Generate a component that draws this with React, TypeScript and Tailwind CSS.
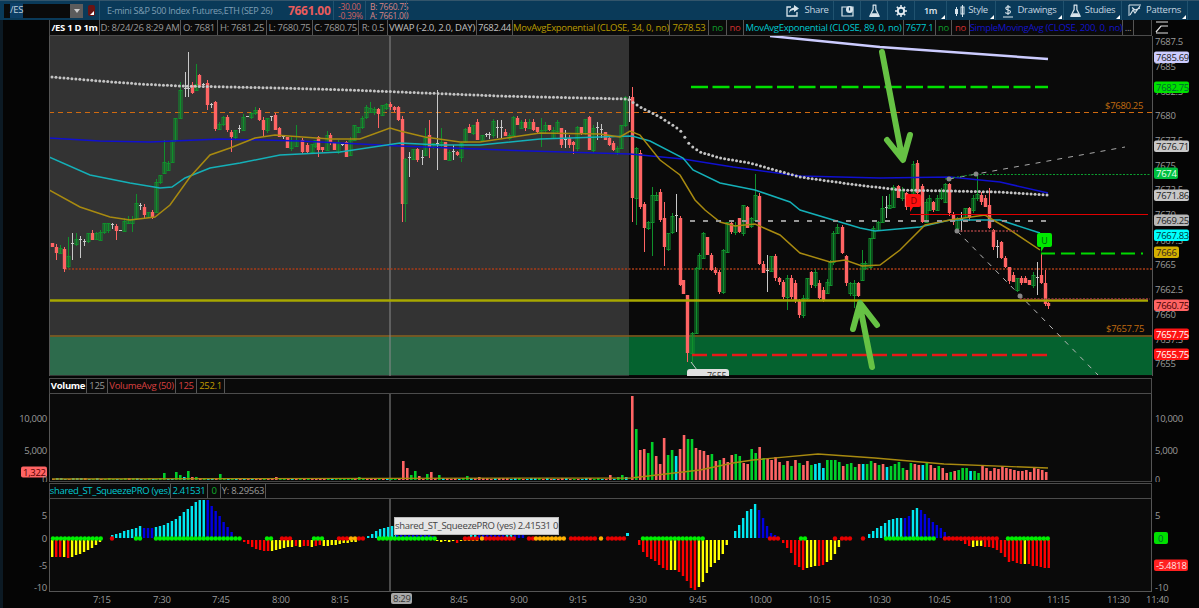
import React from "react";

type P = [number, number];

const lerp = (pts: P[], x: number) => {
  for (let i = 1; i < pts.length; i++) {
    if (x <= pts[i][0]) {
      const [a, b] = pts[i - 1];
      const [c, d] = pts[i];
      return b + ((d - b) * (x - a)) / (c - a);
    }
  }
  return pts[pts.length - 1][1];
};
const poly = (pts: P[]) => pts.map((p) => p.join(",")).join(" ");

let seed = 17;
const rnd = () => {
  seed = (seed * 16807) % 2147483647;
  return seed / 2147483647;
};

// x, open, close, high (0 = auto), low (0 = auto)
const CANDLES: number[][] = [
  [52,243,247],[56,247,253,0,260],[60,253,248],[64,249,269],[68,266,256,237],[72,245,243,233,260],[76,244,239,233],[80,239,241,0,258],[84,241,243],[88,241,233],[92,233,240],[96,239,233],[100,240,232],[104,232,223],[108,230,223],[112,224,226],[116,226,231,0,240],[120,231,230],[124,231,221],[128,223,219],[132,223,219,0,232],
  [136,218,203,194],[140,205,207],[144,207,215],[148,217,212],[152,212,218],[156,212,182],[160,182,175],[164,173,162,140],[168,170,163],[172,162,140],[175,140,118],[180,118,90,82],[185,88,90,72,97],[188,88,89,52,97],[192,85,93],[196,90,84,64],[199,75,87],[203,86,84],[207,83,105,0,110],[211,105,104],[215,102,129],[219,129,124],[223,124,117],[227,117,130],[231,132,137,0,152],[235,137,130],[239,130,128],[243,130,117],[247,117,116],[251,117,113],[255,113,110],[259,110,120],[263,120,130,0,137],[267,130,118],[271,118,116],[275,115,130],[279,128,137],[283,137,136],[287,137,148],[291,148,140],[296,146,140,125],[302,140,152],[307,145,152],[312,152,144],[315,146,140],[318,137,150,0,157],[322,147,150],[327,150,135,131],[330,135,143],[334,143,150],[338,152,142],[342,144,146],[346,142,157],[350,155,140],[354,140,125],[358,132,127],[362,127,118],[366,117,107],[370,112,108,102],[374,112,109],[378,109,114,0,128],[382,115,105],[386,108,104],[390,104,107],[394,107,110],[398,107,120],
  [402,119,204,0,222],[405,203,159,0,222],[409,157,158,152,177],[413,159,149],[417,149,160],[422,158,157,150,165],[425,155,138,128],[429,135,147,120,158],[433,147,143],[437,145,143,90,170],[441,145,142,128],[445,142,160],[449,160,152],[453,152,151,145,160],[457,152,155],[461,157,143,0,162],[465,142,129],[469,127,133],[473,133,125],[477,122,140],[482,140,135],[486,136,134],[489,136,134],[493,135,121],[497,128,127,120,138],[501,128,127,120,138],[505,132,136],[509,138,135],[513,135,117],[517,118,125],[521,128,122],[525,122,128],[529,128,122],[533,122,130],[537,127,132],[541,133,130,118,147],[545,130,125],[549,125,130],[553,138,130],[557,131,122],[561,128,145,0,148],[565,140,139,130,148],[569,138,145],[573,142,145,0,154],[577,148,127],[581,127,133],[585,133,119],[589,117,150],[593,150,128],[597,128,127,122,140],[601,130,129,124,138],[605,132,140],[609,138,145],[613,143,150],[617,153,148],[621,148,125],[625,125,97],[629,100,99,96,122],
  [632,97,198,87,222],[636,198,148,147,225],[640,153,207],[644,204,228,0,252],[648,228,222],[652,222,195,187,256],[656,200,195],[660,192,220],[664,218,247,202,266],[668,249,233],[672,232,216],[676,216,215,194,232],[680,218,285],[683,280,294],[687,295,353,0,362],[692,353,333,0,363],[696,333,268],[699,268,255],[703,258,233],[707,237,255],[711,255,270],[715,270,273],[719,272,292],[723,292,250],[727,252,222],[731,223,232],[735,232,225],[739,218,232],[743,233,205],[747,207,228],[751,226,218],[755,220,195,174],[759,196,264],[763,264,273],[767,271,270,255,292],[771,271,256],[775,256,278],[779,278,282],[783,282,297],[787,297,278,0,310],[791,278,297],[795,283,300],[799,300,315],[803,315,298,0,318],[807,298,278],[811,272,285],[815,285,272],[819,283,298],[823,290,300],[827,293,282],[830,285,262],[833,262,233],[837,233,227,224],[842,227,253],[846,256,283],[850,293,283],[854,295,283,0,308],[858,283,296],[862,280,263,250],[865,268,263],[870,267,238],[873,238,228],[878,230,222],[882,222,208,196],[886,208,207,196,218],[889,208,205,194],[893,207,187],[898,186,198],[902,198,190],[906,193,207],[909,205,197],[913,197,164],[917,163,193,160],[922,186,222],[926,222,202],[929,210,198],[933,202,210],[937,210,198],[941,198,190],[945,202,184],[949,184,213],[953,214,222],[957,228,218],[961,220,219,212,232],[965,217,208],[969,208,218],[973,210,198],[977,198,194,174],[981,195,202],[985,198,207],[989,205,228,188],[993,230,247],[997,247,246,240,258],[1001,242,258],[1005,258,267],[1009,267,281],[1013,275,282],[1017,290,278],[1021,278,283],[1025,278,283],[1029,280,285],[1033,285,275],[1037,278,277,262,295],[1041,275,283,253],[1045,283,304,270],[1048,303,306,0,309],
];

const VWAP: P[] = [[52,77],[100,81],[140,84],[180,86],[280,88],[350,90],[400,92],[500,96],[628,99],[640,107],[660,117],[680,130],[690,145],[700,152],[720,158],[750,163],[800,177],[850,184],[900,190],[1000,192],[1048,195]];
const SMA: P[] = [[49,138],[100,141],[150,142],[220,139],[300,141],[400,146],[530,151],[630,154],[683,159],[733,167],[800,176],[880,178],[950,177],[1000,182],[1048,193]];
const EMA89: P[] = [[49,157],[90,175],[130,183],[160,188],[172,187],[185,178],[210,168],[240,163],[280,155],[340,152],[400,143],[440,145],[480,145],[540,139],[600,137],[632,136],[650,141],[683,158],[693,170],[720,183],[755,190],[790,202],[800,210],[860,228],[875,231],[920,227],[950,220],[1000,220],[1040,233]];
const EMA34: P[] = [[49,190],[80,207],[110,217],[130,220],[155,217],[170,205],[190,177],[210,155],[230,148],[255,138],[275,135],[330,139],[360,139],[390,128],[400,131],[425,137],[460,142],[480,142],[540,133],[600,134],[620,137],[630,131],[640,135],[660,160],[680,175],[695,200],[705,210],[720,222],[735,226],[755,224],[780,235],[800,253],[830,262],[845,260],[862,266],[880,265],[900,250],[925,225],[950,220],[985,215],[1010,230],[1040,250]];

const range = (a: number, b: number, s = 3.98) => {
  const out: number[] = [];
  for (let x = a; x <= b; x += s) out.push(x);
  return out;
};

const candleEls = CANDLES.map(([x, o, c, h = 0, l = 0], i) => {
  const top = Math.min(o, c);
  const bot = Math.max(o, c);
  const grey = bot - top <= 2;
  const up = c < o;
  const col = grey ? "#c8c8c8" : up ? "#10902c" : "#ff6464";
  const hi = h || top - Math.floor(rnd() * 4);
  const lo = l || bot + Math.floor(rnd() * 4);
  return (
    <g key={i}>
      <line x1={x + 0.5} x2={x + 0.5} y1={hi} y2={lo} stroke={col} strokeWidth={1} />
      {grey ? (
        <rect x={x - 1} y={top} width={3} height={1} fill={col} />
      ) : up ? (
        <rect x={x - 1} y={top + 0.5} width={3} height={bot - top} fill="none" stroke={col} strokeWidth={1} />
      ) : (
        <rect x={x - 1.2} y={top} width={3.4} height={bot - top} fill={col} />
      )}
    </g>
  );
});

const MARK: Record<string, string> = { r: "#ff6464", g: "#00d02a", c: "#00e8f0", b: "#0000e0", R: "#ff0000", y: "#ffff00" };

// volume
const VOL_R = [84,51,30,31,27,38,24,16,42,25,30,24,31,45,41,41,32,30,29,25,26,19,20,22,18,25,26,24,17,16,31,27,33,22,21,20,23,18,15,19,14,20,17,15,19,15,16,17,12,20,20,20,18,14,16,17,13,16,16,16,19,17,15,16,13,14,16,18,12,10,17,16,15,15,18,15,12,14,12,7,8,9,10,12,12,9,9,7,14,12,9,12,11,14,12,11,10,9,9,10,8,12,11,10,8];
const VOL_C = "rgrrggr" + "rrggcrrg" + "grrrrgrgrrrggrrggrgrrrrgrgrgrrgcccggggrgggrcggrgrcggggrgrrcgrrgrrgrgggcggrrr";
const VOL_SPECIAL: Record<number, [number, string]> = { 163: [7, "g"], 175: [8, "g"], 179: [5, "g"], 183: [3, "c"], 187: [9, "g"], 191: [3, "r"], 195: [3, "g"], 219: [6, "g"], 275: [3, "r"], 357: [3, "g"], 401: [19, "r"], 405: [12, "r"], 409: [5, "g"], 413: [9, "g"], 417: [4, "r"], 425: [6, "g"], 429: [8, "r"], 437: [5, "g"], 465: [4, "g"], 477: [3, "r"], 610: [5, "r"], 617: [3, "g"], 621: [5, "g"], 625: [3, "c"] };
const leftVol: React.ReactNode[] = [];
for (let i = 0; i < 145; i++) {
  const x = Math.round(52 + i * 3.98);
  const key = Object.keys(VOL_SPECIAL).map(Number).find((k) => Math.abs(k - x) <= 1.9);
  const c = key ? VOL_SPECIAL[key] : [1 + Math.floor(rnd() * 2), rnd() > 0.6 ? "r" : rnd() > 0.5 ? "c" : "g"];
  leftVol.push(<rect key={i} x={x} y={480 - (c[0] as number)} width={2.6} height={c[0] as number} fill={MARK[c[1] as string]} />);
}
const VOL_AVG: P[] = [[52,479],[631,478],[700,470],[733,463],[753,460],[818,454],[875,458],[944,464],[1048,468]];

// squeeze
const seg = (x0: number, hs: number[], cols: string, step = 3.98) =>
  hs.map((h, i) => ({ x: x0 + i * step, h, c: cols[i] ?? cols[cols.length - 1] }));
const rep = (s: string, n: number) => s.repeat(n);
const BARS = [
  ...seg(51, [-17,-17,-17,-17,-18,-17,-15,-14,-12,-10,-8,-5,-2], "yRRyRyyyyyyyy"),
  ...seg(111, [3,4,5,7,8,9,10,12,10,10,10,11,12,13,15,17,19,22,26,29,32,36,38,38,38,32,27,22,16,11,6], rep("c",8)+rep("b",3)+rep("c",13)+rep("b",10)),
  ...seg(243, [-2,-4,-7,-9,-10,-11,-11,-11,-10,-9,-8,-7,-7,-6,-7,-6,-6,-7,-6,-5,-6,-6,-5,-5,-4,-3,-3,-2,-2], "RRRRRRRyyyyyyRyRRyRRyyyyyyyyy"),
  ...seg(367, [2,4,7,9,10,11,12,13], "c"),
  ...seg(396, [12,10,9,8,7,6,5,4,3,2], "b"),
  ...seg(436, [-1,-2,-1,-2,-1,-3,-1,-1,-1,-1,-1], "yyyyyRyyyyy"),
  ...seg(470, [6,7,7,6,8,7,6,6,6,5,5,5,4,4], "ccbbbbbbbccbbb"),
  ...seg(638, [-5,-12,-17,-19,-21,-25,-28,-30,-30,-30,-32,-36,-41,-48,-50,-47,-42,-33,-27,-23,-20,-14,-5], rep("R",8)+"yy"+rep("R",5)+rep("y",8)),
  ...seg(734, [7,13,20,27,29,34,28,20,12,5,3], "ccccccbbbbb"),
  ...seg(782, [-3,-8,-13,-25,-27,-30,-28,-27,-26,-26,-25,-22,-20,-14,-7], "RRRRRRyyyRRyyyy"),
  ...seg(868, [4,7,10,12,15,18,19,20,20,20,22,28,30,28,24,20,16,13,10,6,2], "cccccccccbbccbbbbbbbb"),
  ...seg(960, [-1,-4,-6,-7,-6,-6,-7,-7,-8,-10,-13,-17,-22,-21,-23,-24,-24,-24,-26,-26,-27,-28,-28], "RRRyyyRRRRRRRRRRyRRRRRRR"),
];
const DOTS: [number, number, string][] = [
  [52,101,"#00f000"],[111,112,"#e80000"],[135,140,"#00f000"],[155,240,"#00f000"],[266,272,"#00f000"],[281,290,"#e80000"],[313,322,"#00f000"],[338,346,"#e80000"],[350,354,"#ffb000"],[358,365,"#e80000"],[378,435,"#00f000"],[464,479,"#e80000"],[481,482,"#ffb000"],[485,515,"#e80000"],[528,533,"#e80000"],[535,565,"#ffb000"],[570,596,"#e80000"],[600,603,"#ffb000"],[607,624,"#e80000"],[642,704,"#00f000"],[769,778,"#e80000"],[800,806,"#00f000"],[834,835,"#e80000"],[841,851,"#e80000"],[862,863,"#e80000"],[885,934,"#00f000"],[944,997,"#e80000"],[1007,1050,"#00f000"],
];

const PRICE_TICKS: [string, number][] = [["7687.5",41],["7685",66],["7682.5",91],["7680",115],["7677.5",140],["7675",165],["7672.5",189],["7670",214],["7667.5",240],["7665",264],["7662.5",289],["7660",314],["7657.5",339],["7655",363]];
const PRICE_TAGS: [string, number, string, string, number][] = [
  ["7685.69",57,"#ccccff","#222",35],["7682.75",87,"#00e000","#063",35],["7676.71",146,"#c8c8c8","#222",35],["7674",173,"#00c040","#eafff0",24],["7671.86",195,"#c8c8c8","#222",35],["7669.25",220,"#b8b8b8","#222",35],["7667.83",235,"#00ffff","#033",35],["7666",252,"#d4b000","#322",25],["7660.75",305,"#ff6464","#400",35],["7657.75",334,"#ff1414","#fff",35],["7655.75",354,"#ff1414","#fff",35],
];
const TIMES: [string, number][] = [["7:15",93],["7:30",153],["7:45",212],["8:00",272],["8:15",331],["8:45",450],["9:00",510],["9:15",569],["9:30",629],["9:45",689],["10:00",749],["10:15",808],["10:30",868],["10:45",928],["11:00",988],["11:15",1047],["11:30",1107],["11:40",1146]];

const Tri = () => (
  <span className="absolute right-[1px] bottom-[1px] h-0 w-0 border-b-[4px] border-l-[4px] border-b-white border-l-transparent" />
);

const Tool = ({ w, children, corner }: { w: string; children: React.ReactNode; corner?: boolean }) => (
  <div className={"relative flex h-full items-center justify-center gap-[3px] border-r border-[#20526f] text-[9.5px] text-[#c6d6e0] " + w}>
    {children}
    {corner && <Tri />}
  </div>
);

const Cell = ({ c, children, w }: { c: string; children: React.ReactNode; w: string }) => (
  <div className={"flex h-full shrink-0 items-center justify-center border-r border-[#555] whitespace-nowrap " + c + " " + w}>{children}</div>
);

const Legend = ({ children, h }: { children: React.ReactNode; h: string }) => (
  <div className="flex shrink-0">
    <div className="w-[49px] shrink-0" />
    <div className={"flex w-[1103px] shrink-0 border border-[#4c4c4c] bg-[#0a0a0a] text-[9.5px] leading-none " + h}>{children}</div>
    <div className="flex-1" />
  </div>
);

const Flask = () => (
  <svg width="11" height="14" viewBox="0 0 12 15">
    <path d="M4 1h4M4.5 1v5L1 13h10L7.5 6V1" fill="none" stroke="#d8e4ec" strokeWidth="1.3" />
    <path d="M3 10h6l2 4H1z" fill="#d8e4ec" />
  </svg>
);

export default function App() {
  return (
    <div className="flex h-[608px] w-[1199px] flex-col overflow-hidden bg-[#050505] tracking-[-0.3px] shadow-[inset_3px_0_0_#0c1a24] [font-family:'Open_Sans',sans-serif]">
      {/* top toolbar */}
      <div className="flex h-[20px] shrink-0 items-center border-t border-[#33556b] bg-[#0a3a59]">
        <div className="ml-[4px] flex h-[14px] w-[66px] items-center bg-[#0a0a0a] pl-[6px] text-[9.5px] text-[#c0d0dc]">
          <span className="bg-[#0d3f66]">/ES</span>
        </div>
        <div className="flex h-[14px] w-[13px] items-center justify-center bg-[#5c5c5c]">
          <span className="h-0 w-0 border-x-[3px] border-t-[4px] border-x-transparent border-t-[#ccc]" />
        </div>
        <div className="relative ml-[5px] flex h-[11px] w-[7px] items-center justify-center rounded-[2px] bg-[#6a1414]">
          <Tri />
        </div>
        <div className="ml-[4px] h-full w-px bg-[#20526f]" />
        <div className="ml-[7px] w-[176px] whitespace-nowrap text-[9px] text-[#7f9fb4]">E-mini S&amp;P 500 Index Futures,ETH (SEP 26)</div>
        <div className="ml-[5px] w-[41px] text-[12px] font-bold whitespace-nowrap text-[#e85c5c]">7661.00</div>
        <div className="ml-[4px] h-full w-px bg-[#20526f]" />
        <div className="ml-[4px] w-[27px] text-[8.5px] leading-[9px] text-[#d06060]">
          <div>-30.00</div>
          <div>-0.39%</div>
        </div>
        <div className="h-full w-px bg-[#20526f]" />
        <div className="ml-[4px] w-[36px] whitespace-nowrap text-[8.5px] leading-[9px] text-[#d88484]">
          <div>B: 7660.75</div>
          <div>A: 7661.00</div>
        </div>
        <div className="h-full w-px bg-[#20526f]" />
        <div className="ml-auto flex h-full">
          <Tool w="w-[52px]">
            <svg width="14" height="12" viewBox="0 0 14 12">
              <path d="M5 2H1v9h10V7" fill="none" stroke="#d8e4ec" strokeWidth="1.3" />
              <path d="M8 0l5 3.5L8 7V5C6 5 4 6 3 8c0-3 2-5 5-5.500z" fill="#d8e4ec" />
            </svg>
            <span className="ml-[1px]">Share</span>
          </Tool>
          <Tool w="w-[27px]">
            <svg width="13" height="12" viewBox="0 0 13 12">
              <path d="M1 2h11v9H1z" fill="none" stroke="#d8e4ec" strokeWidth="1.2" />
              <circle cx="8.500" cy="4.500" r="3.500" fill="#d8e4ec" />
              <path d="M8.500 2.500v3" stroke="#0a3a59" strokeWidth="1.2" />
            </svg>
          </Tool>
          <Tool w="w-[27px]"><Flask /></Tool>
          <Tool w="w-[27px]">
            <svg width="12" height="12" viewBox="0 0 12 12">
              <circle cx="6" cy="6" r="3.200" fill="none" stroke="#e4ecf2" strokeWidth="2" />
              <path d="M6 0v2.500M6 9.500V12M0 6h2.500M9.500 6H12M1.800 1.800l1.800 1.800M8.400 8.400l1.800 1.800M10.200 1.800L8.400 3.600M3.600 8.400l-1.800 1.800" stroke="#e4ecf2" strokeWidth="1.500" />
            </svg>
          </Tool>
          <Tool w="w-[32px]" corner><span className="text-[9px] font-semibold text-[#e4ecf2]">1m</span></Tool>
          <Tool w="w-[49px]" corner>
            <svg width="11" height="14" viewBox="0 0 11 14">
              <path d="M2.500 3v9M8.500 1v12" stroke="#d8e4ec" strokeWidth="1" />
              <rect x="1" y="5" width="3" height="5" fill="#d8e4ec" />
              <rect x="7" y="3" width="3" height="7" fill="none" stroke="#d8e4ec" />
            </svg>
            <span>Style</span>
          </Tool>
          <Tool w="w-[68px]" corner>
            <svg width="10" height="14" viewBox="0 0 10 14">
              <path d="M0 13h10M5 1v10M7.500 3.500C6 2 2.500 2.500 2.800 4.500c.3 2 4.700 1 4.700 3.200C7.500 9.800 4 10 2.300 8.500" fill="none" stroke="#d8e4ec" strokeWidth="1.100" />
            </svg>
            <span className="ml-[2px]">Drawings</span>
          </Tool>
          <Tool w="w-[58px]" corner>
            <Flask />
            <span className="ml-[1px]">Studies</span>
          </Tool>
          <Tool w="w-[66px]" corner>
            <svg width="14" height="13" viewBox="0 0 14 13">
              <path d="M1 1h12M1 1v11" stroke="#d8e4ec" strokeWidth="1" />
              <path d="M2 11l3-5 2 3 5-7M4 3.500l3 2.500 5-2" fill="none" stroke="#d8e4ec" strokeWidth="1.200" />
            </svg>
            <span className="ml-[1px]">Patterns</span>
          </Tool>
          <div className="w-[11px]" />
        </div>
      </div>

      {/* main legend */}
      <div className="flex h-[16px] shrink-0">
        <div className="w-[49px] shrink-0" />
        <div className="flex w-[1103px] shrink-0 border-x border-b border-[#4c4c4c] bg-[#0a0a0a] text-[9.5px] leading-none">
          <Cell c="font-bold text-white" w="w-[50px]">/ES 1 D 1m</Cell>
          <Cell c="text-[#9a9a9a]" w="w-[81px]">D: 8/24/26 8:29 AM</Cell>
          <Cell c="text-[#9a9a9a]" w="w-[37px]">O: 7681</Cell>
          <Cell c="text-[#9a9a9a]" w="w-[49px]">H: 7681.25</Cell>
          <Cell c="text-[#9a9a9a]" w="w-[46px]">L: 7680.75</Cell>
          <Cell c="text-[#9a9a9a]" w="w-[46px]">C: 7680.75</Cell>
          <Cell c="text-[#9a9a9a]" w="w-[29px]">R: 0.5</Cell>
          <Cell c="text-[#c0c0c0]" w="w-[89px]">VWAP (-2.0, 2.0, DAY)</Cell>
          <Cell c="text-[#c0c0c0]" w="w-[36px]">7682.44</Cell>
          <Cell c="text-[#b89a00]" w="w-[157px]">MovAvgExponential (CLOSE, 34, 0, no)</Cell>
          <Cell c="text-[#b89a00]" w="w-[39px]">7678.53</Cell>
          <Cell c="text-[#0f9a2a]" w="w-[18px]">no</Cell>
          <Cell c="text-[#d03030]" w="w-[17px]">no</Cell>
          <Cell c="text-[#00c8d0]" w="w-[160px]">MovAvgExponential (CLOSE, 89, 0, no)</Cell>
          <Cell c="text-[#00c8d0]" w="w-[32px]">7677.1</Cell>
          <Cell c="text-[#0f9a2a]" w="w-[16px]">no</Cell>
          <Cell c="text-[#d03030]" w="w-[18px]">no</Cell>
          <Cell c="text-[#1414c8]" w="w-[153px]">SimpleMovingAvg (CLOSE, 200, 0, no)</Cell>
          <Cell c="text-[#9a9a9a]" w="w-[11px]">...</Cell>
        </div>
        <svg className="mt-[1px] ml-[3px] block h-[13px] w-[14px]" viewBox="0 0 14 13">
          <path d="M1 1h12M1 12h12M1 11l5-6h7" fill="none" stroke="#e0e0e0" strokeWidth="1.200" />
        </svg>
      </div>

      {/* main chart */}
      <div className="flex h-[340px] shrink-0">
        <div className="w-[49px] shrink-0" />
        <svg className="block h-[340px] w-[1103px] shrink-0" viewBox="49 36 1103 340">
          <rect x="49" y="36" width="580" height="340" fill="#333333" />
          <rect x="629" y="36" width="523" height="340" fill="#0a0a0a" />
          <rect x="49" y="337" width="580" height="38" fill="#2d6b4c" />
          <rect x="629" y="337" width="523" height="38" fill="#05622f" />
          <line x1="49" x2="1152" y1="336" y2="336" stroke="#8a6420" strokeWidth="1.500" />
          <line x1="390" x2="390" y1="36" y2="376" stroke="#8c8c8c" />
          <line x1="49" x2="1152" y1="112.500" y2="112.500" stroke="#d06a10" strokeDasharray="5 4" />
          <line x1="65" x2="1152" y1="269" y2="269" stroke="#a83c18" strokeDasharray="2 1.500" strokeWidth="1.300" />
          <text x="1105" y="109" fontSize="9.5" fill="#c06a10">$7680.25</text>
          <text x="1106" y="332" fontSize="9.5" fill="#c06a10">$7657.75</text>

          {candleEls}

          <polyline points={poly(SMA)} fill="none" stroke="#1010d0" strokeWidth="1.500" />
          <polyline points={poly(EMA89)} fill="none" stroke="#14b0b8" strokeWidth="1.500" />
          <polyline points={poly(EMA34)} fill="none" stroke="#a88a10" strokeWidth="1.500" />
          {range(52, 1048).map((x) => (
            <circle key={x} cx={x} cy={lerp(VWAP, x)} r="1.500" fill="#c4c4c4" />
          ))}

          <polyline points="770,36 880,47 1048,59" fill="none" stroke="#ccccff" strokeWidth="2.500" />
          <line x1="691" x2="1048" y1="87" y2="87" stroke="#00e000" strokeWidth="2.500" strokeDasharray="17 4.500" />
          <line x1="690" x2="1048" y1="221" y2="221" stroke="#989898" strokeWidth="2" strokeDasharray="5 8" />
          <line x1="910" x2="1148" y1="214.500" y2="214.500" stroke="#e00000" strokeWidth="1.200" />
          <line x1="976" x2="1150" y1="174.500" y2="174.500" stroke="#0ca030" strokeDasharray="2 1.500" />
          <line x1="1041" x2="1143" y1="253.500" y2="253.500" stroke="#00d800" strokeWidth="2" strokeDasharray="14 6" />
          <line x1="692" x2="1048" y1="355" y2="355" stroke="#e81818" strokeWidth="2.500" strokeDasharray="15 5" />
          <line x1="49" x2="1148" y1="300.500" y2="300.500" stroke="#a8a800" strokeWidth="2.500" />
          <line x1="957" x2="1018" y1="231" y2="231" stroke="#a04040" strokeDasharray="2 1.500" strokeWidth="1.300" />
          <line x1="1020" x2="1150" y1="299" y2="299" stroke="#a04040" strokeDasharray="2 1.500" strokeWidth="1.300" />
          <line x1="949" x2="1125" y1="179" y2="147" stroke="#a8a8a8" strokeDasharray="5 6" />
          <line x1="957" x2="1098" y1="231" y2="375" stroke="#b8b8b8" strokeDasharray="5 6" />
          <line x1="945" x2="976" y1="179" y2="174" stroke="#10a030" strokeDasharray="2 2" />
          <circle cx="949" cy="179" r="2.500" fill="#888" />
          <circle cx="976" cy="174" r="2.500" fill="#888" />
          <circle cx="957" cy="231" r="2.500" fill="#888" />
          <circle cx="1020" cy="296" r="2.500" fill="#888" />

          {/* D / U bubbles */}
          <path d="M908 194h11a2 2 0 0 1 2 2v9a2 2 0 0 1-2 2h-6l-3 5v-5h-2a2 2 0 0 1-2-2v-9a2 2 0 0 1 2-2z" fill="#ff1010" />
          <text x="913.500" y="204" textAnchor="middle" fontSize="9" fill="#7a0000">D</text>
          <path d="M1039 233h11a2 2 0 0 1 2 2v10a2 2 0 0 1-2 2h-6l-3 5v-5h-2a2 2 0 0 1-2-2v-10a2 2 0 0 1 2-2z" fill="#00e800" />
          <text x="1044.500" y="244" textAnchor="middle" fontSize="9" fill="#005a10">U</text>

          {/* low bubble */}
          <line x1="691" x2="697" y1="362" y2="370" stroke="#ccc" />
          <rect x="687" y="369" width="42" height="12" rx="3" fill="#e0e0e0" />
          <text x="707" y="379" fontSize="9" fill="#333">7655</text>

          {/* hand drawn arrows */}
          <path d="M882 52 L902 157 M887 140 L903 160 L910 135" fill="none" stroke="#66c244" strokeWidth="6" strokeLinecap="round" strokeLinejoin="round" />
          <path d="M872 367 L860 306 M853 329 L860 303 L877 325" fill="none" stroke="#66c244" strokeWidth="6" strokeLinecap="round" strokeLinejoin="round" />
          <line x1="49.500" x2="49.500" y1="36" y2="376" stroke="#555" />
        </svg>
        <svg className="block h-[340px] w-[47px] shrink-0 border-l border-[#555]" viewBox="1153 36 46 340">
          {PRICE_TICKS.map(([t, y]) => (
            <text key={t} x="1155" y={y + 3.500} fontSize="9.5" fill="#9a9a9a">{t}</text>
          ))}
          {PRICE_TAGS.map(([t, y, bg, fg, w]) => (
            <g key={t}>
              <rect x="1154" y={y - 5.500} width={w} height="11.500" rx="2" fill={bg} />
              <text x="1156" y={y + 3.500} fontSize="9.5" fill={fg}>{t}</text>
            </g>
          ))}
        </svg>
      </div>

      <div className="h-[2px] shrink-0" />

      {/* volume legend */}
      <Legend h="h-[16px]">
        <Cell c="font-bold text-white" w="w-[37px]">Volume</Cell>
        <Cell c="text-[#9a9a9a]" w="w-[21px]">125</Cell>
        <Cell c="text-[#d84040]" w="w-[68px]">VolumeAvg (50)</Cell>
        <Cell c="text-[#d84040]" w="w-[21px]">125</Cell>
        <Cell c="text-[#c09a00]" w="w-[28px]">252.1</Cell>
      </Legend>

      {/* volume */}
      <div className="flex h-[88px] shrink-0">
        <svg className="block h-[88px] w-[49px] shrink-0" viewBox="0 394 49 88">
          <text x="47" y="422" textAnchor="end" fontSize="9.5" fill="#9a9a9a">10,000</text>
          <text x="47" y="454" textAnchor="end" fontSize="9.5" fill="#9a9a9a">5,000</text>
          <rect x="21" y="466.500" width="26" height="11" rx="2" fill="#ff6464" />
          <text x="23" y="475.500" fontSize="9.5" fill="#500">1,322</text>
          <text x="47" y="483" textAnchor="end" fontSize="9" fill="#9a9a9a">0</text>
        </svg>
        <svg className="block h-[88px] w-[1103px] shrink-0 border-x border-[#555] bg-[#0a0a0a]" viewBox="50 394 1101 88">
          <line x1="390" x2="390" y1="394" y2="482" stroke="#8c8c8c" />
          {leftVol}
          {VOL_R.map((h, i) => (
            <rect key={i} x={631 + i * 3.98} y={480 - h} width={2.6} height={h} fill={MARK[VOL_C[i] ?? "r"]} />
          ))}
          <polyline points={poly(VOL_AVG)} fill="none" stroke="#a88a10" strokeWidth="1.300" />
          <line x1="50" x2="1152" y1="481.500" y2="481.500" stroke="#444" />
        </svg>
        <svg className="block h-[88px] w-[47px] shrink-0" viewBox="1152 394 47 88">
          <text x="1155" y="422" fontSize="9.5" fill="#9a9a9a">10,000</text>
          <text x="1155" y="454" fontSize="9.5" fill="#9a9a9a">5,000</text>
          <text x="1155" y="483" fontSize="9" fill="#9a9a9a">0</text>
        </svg>
      </div>

      <div className="h-px shrink-0" />

      {/* squeeze legend */}
      <Legend h="h-[16px]">
        <Cell c="text-[#00c8d0]" w="w-[121px]">shared_ST_SqueezePRO (yes)</Cell>
        <Cell c="text-[#00c8d0]" w="w-[37px]">2.41531</Cell>
        <Cell c="text-[#0fb02a]" w="w-[13px]">0</Cell>
        <Cell c="text-[#9a9a9a]" w="w-[45px]">Y: 8.29563</Cell>
      </Legend>

      {/* squeeze */}
      <div className="flex h-[93px] shrink-0">
        <svg className="block h-[93px] w-[49px] shrink-0" viewBox="0 499 49 93">
          <text x="47" y="519" textAnchor="end" fontSize="9.5" fill="#9a9a9a">5</text>
          <text x="47" y="542" textAnchor="end" fontSize="9.5" fill="#9a9a9a">0</text>
          <text x="47" y="569" textAnchor="end" fontSize="9.5" fill="#9a9a9a">-5</text>
          <text x="47" y="591" textAnchor="end" fontSize="9.5" fill="#9a9a9a">-10</text>
        </svg>
        <div className="relative w-[1103px] shrink-0">
          <svg className="block h-[93px] w-[1103px] border-x border-b border-[#555] bg-[#0a0a0a]" viewBox="50 499 1101 92">
            <line x1="390" x2="390" y1="499" y2="592" stroke="#8c8c8c" />
            {BARS.map((b, i) => (
              <rect key={i} x={b.x} y={b.h > 0 ? 538 - b.h : 540} width={2.400} height={Math.abs(b.h)} fill={MARK[b.c]} />
            ))}
            {DOTS.flatMap(([a, b, c]) =>
              range(a, b, 3.980).map((x) => <circle key={a + "-" + x} cx={x + 1} cy="538.500" r="2.200" fill={c} />)
            )}
            <rect x="626" y="533" width="3" height="3" fill="#00e8f0" />
          </svg>
          <div className="absolute top-[18px] left-[345px] flex h-[18px] w-[165px] items-center justify-center border border-[#bbb] bg-[#e6e6e6] text-[9.5px] whitespace-nowrap text-[#444]">
            shared_ST_SqueezePRO (yes) 2.41531 0
          </div>
        </div>
        <svg className="block h-[93px] w-[47px] shrink-0" viewBox="1152 499 47 93">
          <text x="1155" y="519" fontSize="9.5" fill="#9a9a9a">5</text>
          <rect x="1154" y="532" width="14" height="12" rx="2" fill="#00e000" />
          <text x="1158" y="541.500" fontSize="9.5" fill="#063">0</text>
          <rect x="1154" y="559.500" width="34" height="11.500" rx="2" fill="#ff2020" />
          <text x="1156" y="568.500" fontSize="9.5" fill="#ffe0e0">-5.4818</text>
          <text x="1155" y="591" fontSize="9.5" fill="#9a9a9a">-10</text>
        </svg>
      </div>

      {/* time axis */}
      <svg className="block h-[16px] w-[1199px] shrink-0" viewBox="0 592 1199 16">
        {TIMES.map(([t, x]) => (
          <text key={t} x={x} y="602.500" fontSize="9.5" fill="#9a9a9a">{t}</text>
        ))}
        <rect x="391" y="593" width="21" height="11" rx="2" fill="#a8a8a8" />
        <text x="393" y="602" fontSize="9.5" fill="#333">8:29</text>
      </svg>
    </div>
  );
}
